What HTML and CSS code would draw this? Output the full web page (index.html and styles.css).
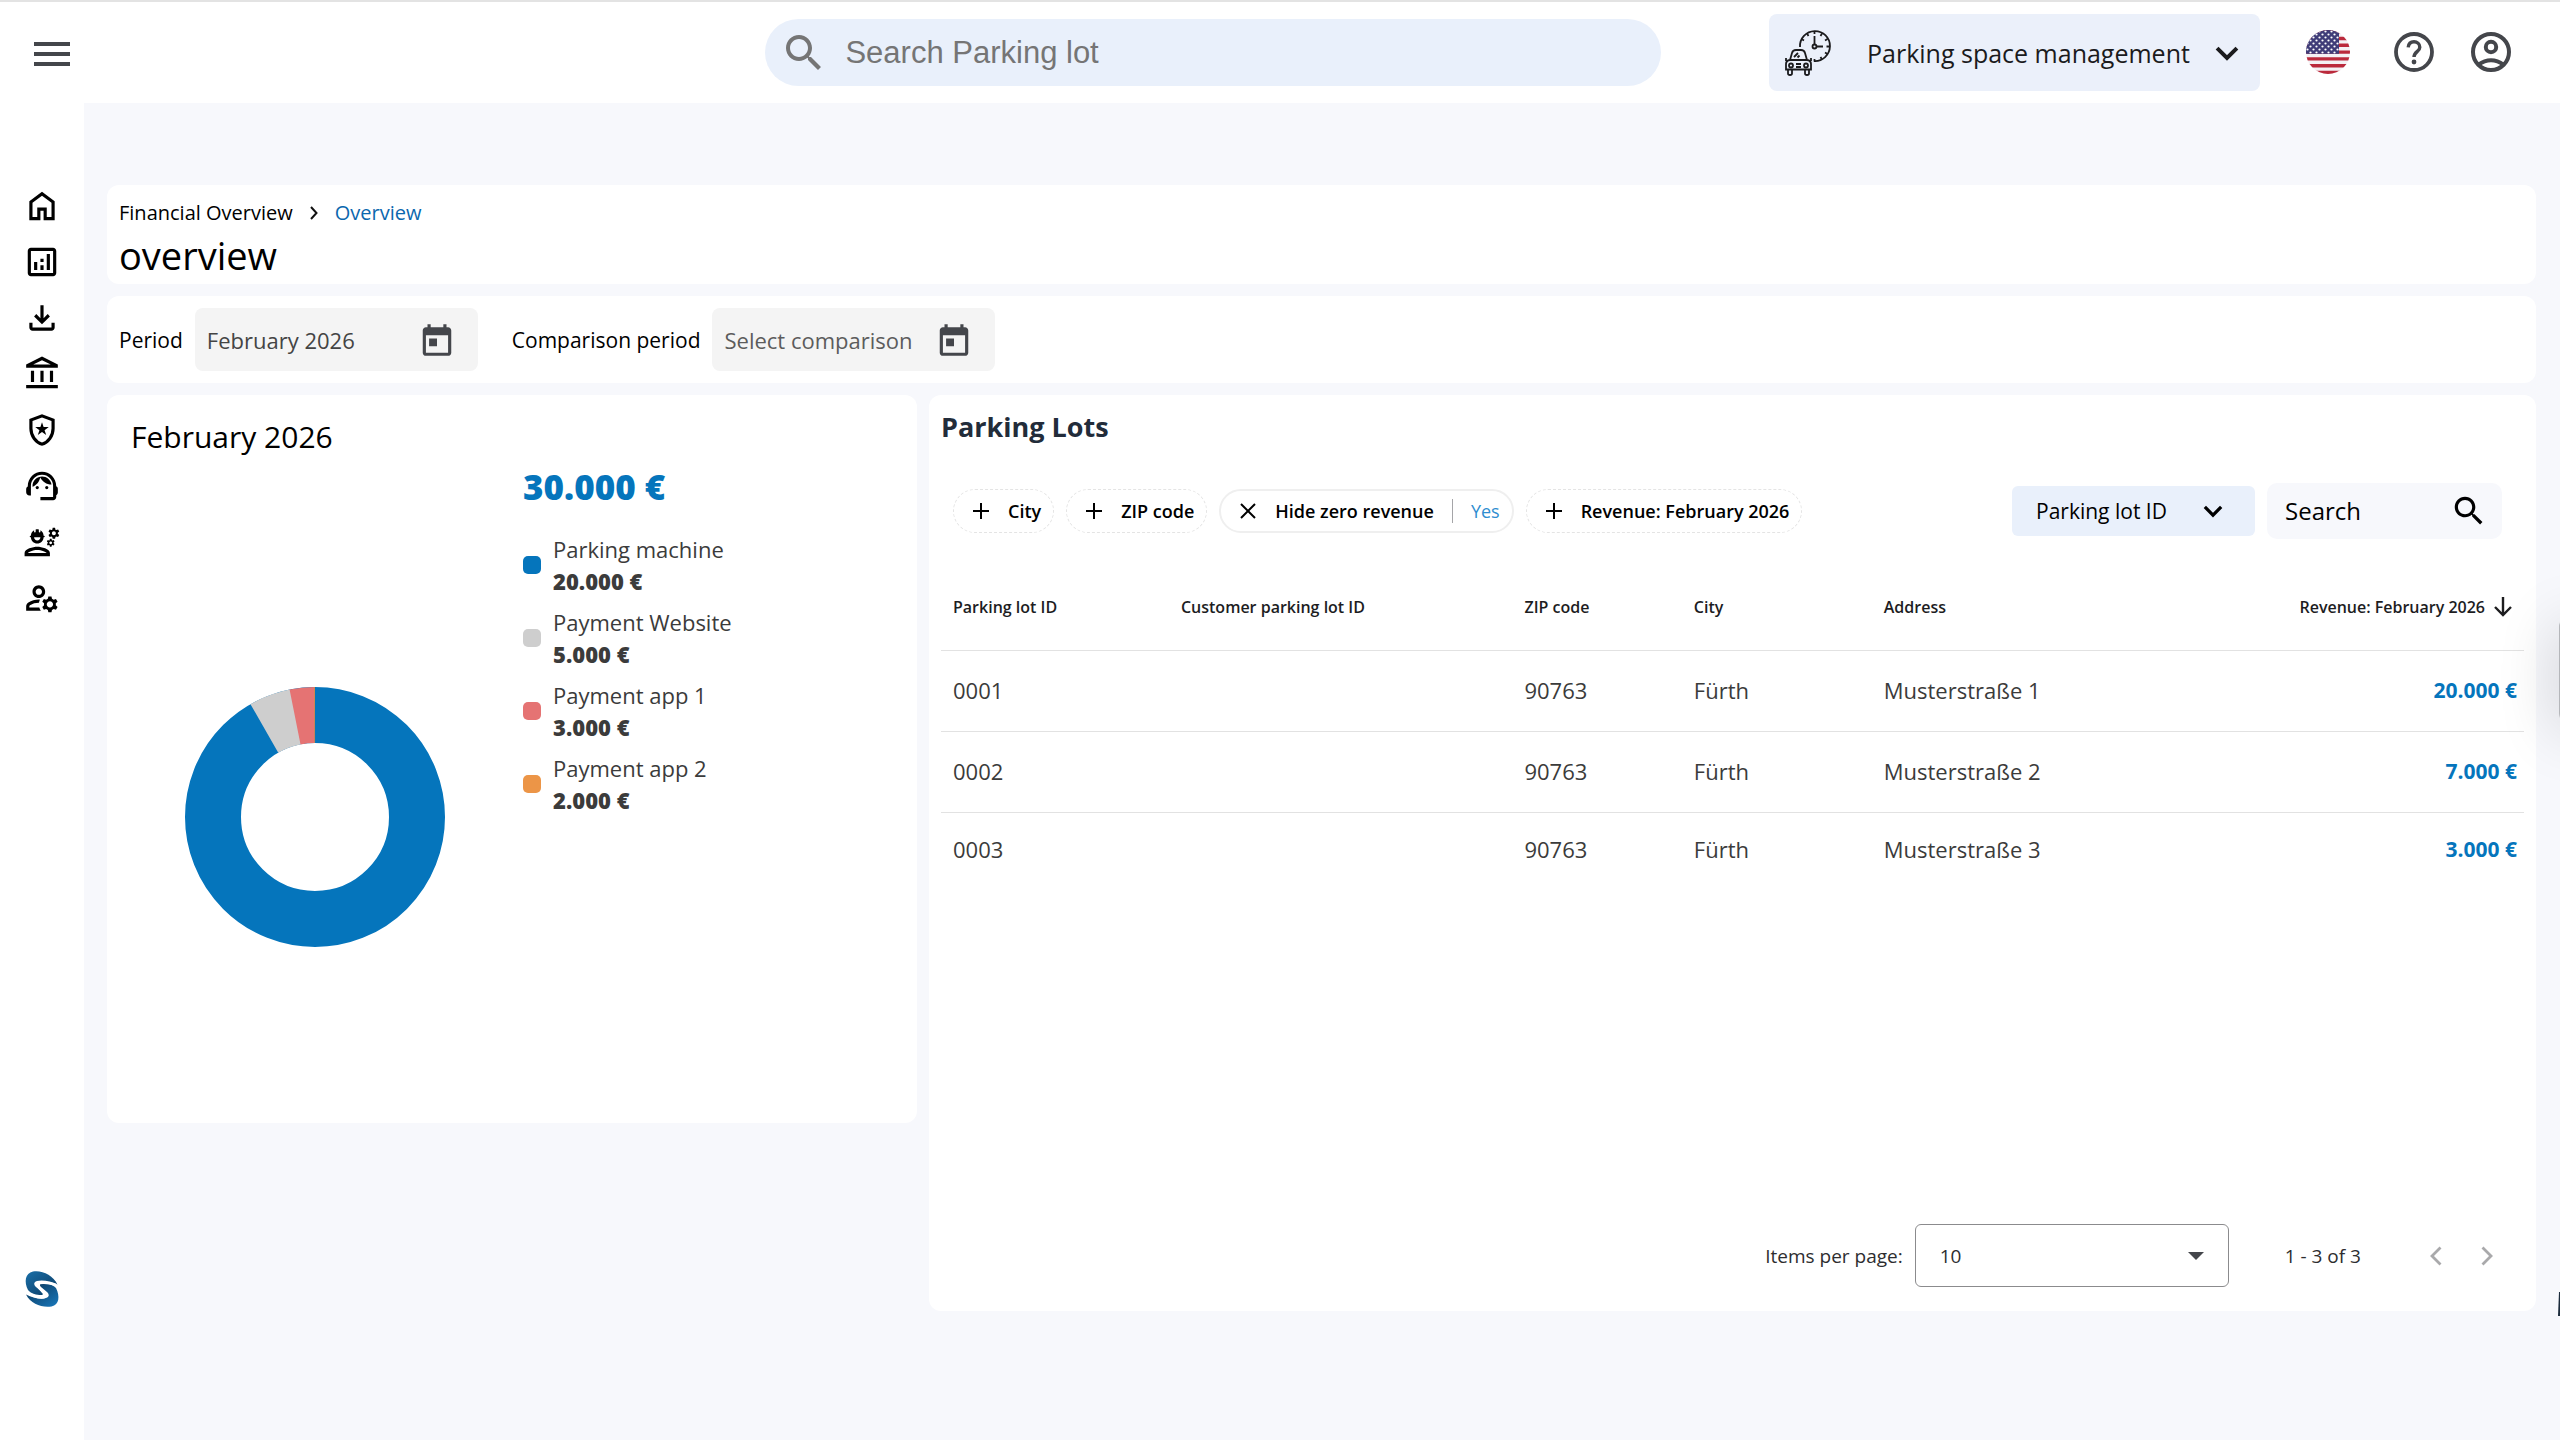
FILE: index.html
```html
<!DOCTYPE html>
<html lang="en">
<head>
<meta charset="utf-8">
<title>Financial Overview</title>
<link rel="stylesheet" href="styles.css">
</head>
<body>
<svg class="defs" aria-hidden="true">
  <symbol id="i-search" viewBox="0 0 24 24"><path d="M15.5 14h-.79l-.28-.27C15.41 12.59 16 11.11 16 9.5 16 5.91 13.09 3 9.5 3S3 5.91 3 9.5 5.91 16 9.5 16c1.61 0 3.09-.59 4.23-1.57l.27.28v.79l5 4.99L20.49 19l-4.99-5zm-6 0C7.01 14 5 11.99 5 9.5S7.01 5 9.5 5 14 7.01 14 9.5 11.99 14 9.5 14z"/></symbol>
  <symbol id="i-calendar" viewBox="0 0 24 24"><path d="M19 4h-1V2h-2v2H8V2H6v2H5c-1.1 0-2 .9-2 2v14c0 1.1.9 2 2 2h14c1.1 0 2-.9 2-2V6c0-1.1-.9-2-2-2zm0 16H5V9h14v11zM7 11h5v5H7z"/></symbol>
  <symbol id="i-chevron" viewBox="0 0 24 24"><path d="M5 8.5l7 7 7-7" fill="none" stroke="currentColor" stroke-width="2.800"/></symbol>
  <symbol id="i-plus" viewBox="0 0 18 18"><path d="M9 1v16M1 9h16" fill="none" stroke="currentColor" stroke-width="2"/></symbol>
  <symbol id="i-close" viewBox="0 0 18 18"><path d="M2 2l14 14M16 2L2 16" fill="none" stroke="currentColor" stroke-width="2"/></symbol>
</svg>

<header class="topbar">
  <div class="topbar-start">
    <button class="icon-button" type="button" aria-label="Menu">
      <svg width="36" height="24" viewBox="0 0 36 24"><path d="M0 2h36M0 12h36M0 22h36" stroke="#44464b" stroke-width="4"/></svg>
    </button>
  </div>
  <label class="global-search">
    <svg class="icon-48"><use href="#i-search"/></svg>
    <input type="search" placeholder="Search Parking lot" aria-label="Search Parking lot">
  </label>
  <div class="topbar-end">
    <div class="module">
      <svg class="module-icon" viewBox="0 0 64 64" stroke="#1b1b1d" stroke-width="1.800">
        <path d="M23 26A15 15 0 1 1 37 40"/>
        <circle cx="37.500" cy="25.500" r="2"/>
        <path d="M37.500 23V15M40 25.500H46M37.500 10v3M37.500 38v2.500M49.500 25.500H53M30 12.500l1.500 2.500M45 12.500L43.500 15M50.500 18L48 19.500M50.500 33L48 31.500M45 38.500L43.500 36M24.500 18l2.500 1.500"/>
        <path d="M13 39l2-7q.8-3 4-3h5q3.200 0 4 3l2 7M13 39q-4 .5-4 4v5.500h25V43q0-3.500-4-4zM11 49v3.500q0 1.500 2 1.500t2-1.500V49M28 49v3.500q0 1.500 2 1.500t2-1.500V49M9 40v-3M34 40v-3M17 36l4-4M20.500 36.500l2-2M19 43h5M19 46h5"/>
        <circle cx="14" cy="44.500" r="2"/><circle cx="29" cy="44.500" r="2"/>
      </svg>
      <select class="module-select" aria-label="Module"><option>Parking space management</option></select>
      <svg class="select-arrow icon-34"><use href="#i-chevron"/></svg>
    </div>
    <button class="icon-button flag" type="button" aria-label="Language: English">
      <svg width="44" height="44" viewBox="0 0 44 44">
        <defs>
          <clipPath id="disc"><circle cx="22" cy="22" r="22"/></clipPath>
          <pattern id="stars" width="6" height="6" patternUnits="userSpaceOnUse"><circle cx="1.500" cy="1.500" r="1.100" fill="#fff"/><circle cx="4.500" cy="4.500" r="1.100" fill="#fff"/></pattern>
        </defs>
        <g clip-path="url(#disc)">
          <rect width="44" height="44" fill="#f4f1f4"/>
          <path d="M0 1.700h44M0 8.500h44M0 15.300h44M0 22.100h44M0 28.900h44M0 35.700h44M0 42.500h44" stroke="#bb2a3c" stroke-width="3.400"/>
          <rect width="33" height="23.800" fill="#3f3c78"/><rect width="33" height="23.800" fill="url(#stars)"/>
        </g>
      </svg>
    </button>
    <button class="icon-button help" type="button" aria-label="Help">
      <svg class="icon-48" viewBox="0 0 24 24"><g fill="none" stroke="currentColor" stroke-width="1.900"><circle cx="12" cy="12" r="9"/><path d="M9.100 9.700c.2-1.800 1.400-2.800 2.900-2.800s2.900 1.100 2.900 2.700c0 2.200-2.900 2.300-2.900 4.900" stroke-width="1.700"/></g><circle cx="12" cy="17" r="1.200"/></svg>
    </button>
    <button class="icon-button" type="button" aria-label="Account">
      <svg class="icon-48" viewBox="0 0 24 24"><g fill="none" stroke="currentColor" stroke-width="2"><circle cx="12" cy="12" r="9"/><circle cx="12" cy="9.500" r="2.600"/><path d="M5.800 18.300q2.900-2.200 6.200-2.200t6.200 2.200"/></g></svg>
    </button>
  </div>
</header>

<div class="shell">
  <nav class="sidebar" aria-label="Main">
    <a href="#" aria-label="Home"><svg viewBox="0 0 24 24"><path d="M6 19h3v-6h6v6h3v-9l-6-4.500L6 10v9zm-2 2V9l8-6 8 6v12h-7v-6h-2v6H4z"/></svg></a>
    <a href="#" aria-label="Analytics"><svg viewBox="0 0 24 24"><path d="M19 3H5c-1.100 0-2 .9-2 2v14c0 1.100.9 2 2 2h14c1.100 0 2-.9 2-2V5c0-1.100-.9-2-2-2zm0 16H5V5h14v14zM7 12h2v5H7zM15 7h2v10h-2zM11 14h2v3h-2zM11 10h2v2h-2z"/></svg></a>
    <a href="#" aria-label="Downloads"><svg viewBox="0 0 24 24"><path d="M12 16l-5-5 1.400-1.450 2.600 2.600V4h2v8.150l2.600-2.600L17 11zM6 20c-1.100 0-2-.9-2-2v-3h2v3h12v-3h2v3c0 1.100-.9 2-2 2z"/></svg></a>
    <a href="#" aria-label="Finance"><svg viewBox="0 0 24 24"><path d="M5 17v-7h2v7zm6 0v-7h2v7zm-9 4v-2h20v2zm15-4v-7h2v7zM2 8V6l10-5 10 5v2zm4.450-2h11.100L12 3.250z"/></svg></a>
    <a href="#" aria-label="Enforcement"><svg viewBox="0 0 24 24"><path d="M12 22q-3.475-.875-5.738-3.988T4 11.100V5l8-3 8 3v6.100q0 3.800-2.262 6.913T12 22zm0-2.100q2.600-.825 4.300-3.300t1.700-5.500V6.375l-6-2.250-6 2.250V11.100q0 3.025 1.700 5.500t4.300 3.300z"/><path d="M12 7.050l1 3.120 3.280-.01-2.660 1.920 1.030 3.110L12 13.250l-2.650 1.940 1.030-3.110-2.660-1.920 3.280.01z"/></svg></a>
    <a href="#" aria-label="Support"><svg viewBox="0 0 24 24"><path d="M21 12.220C21 6.730 16.740 3 12 3c-4.690 0-9 3.650-9 9.280-.6.340-1 .98-1 1.720v2c0 1.100.9 2 2 2h1v-6.100c0-3.870 3.130-7 7-7s7 3.130 7 7V19h-8v2h8c1.100 0 2-.9 2-2v-1.220c.59-.31 1-.92 1-1.640v-2.300c0-.7-.41-1.310-1-1.620z"/><circle cx="9" cy="13" r="1"/><circle cx="15" cy="13" r="1"/><path d="M18 11.030C17.520 8.180 15.040 6 12.050 6c-3.030 0-6.290 2.510-6.030 6.450 2.470-1.010 4.330-3.210 4.860-5.890 1.310 2.630 4 4.440 7.120 4.470z"/></svg></a>
    <a href="#" aria-label="Technicians"><svg viewBox="0 0 24 24"><path d="M9 15c-2.670 0-8 1.340-8 4v2h16v-2c0-2.660-5.330-4-8-4zm-6 4c.22-.72 3.310-2 6-2 2.700 0 5.800 1.290 6 2H3zM4.740 9H5c0 2.210 1.790 4 4 4s4-1.790 4-4h.26c.27 0 .49-.22.49-.49v-.02c0-.27-.22-.49-.49-.49H13c0-1.480-.81-2.750-2-3.450v.95c0 .28-.22.5-.5.5s-.5-.22-.5-.5V4.140C9.680 4.060 9.350 4 9 4s-.68.060-1 .14V5.500c0 .28-.22.5-.5.5S7 5.780 7 5.500v-.95C5.810 5.250 5 6.520 5 8h-.26c-.27 0-.49.22-.49.49v.03c0 .26.22.48.49.48zM11 9c0 1.100-.9 2-2 2s-2-.9-2-2h4zM21.980 6.230l.93-.83-.75-1.300-1.190.39c-.14-.11-.3-.2-.47-.27L20.250 3h-1.500l-.25 1.220c-.17.070-.33.160-.48.270l-1.180-.39-.75 1.300.93.830c-.02.170-.02.350 0 .520l-.93.850.75 1.300 1.200-.38c.13.100.28.180.43.250l.28 1.230h1.500l.27-1.220c.16-.07.3-.15.44-.25l1.190.38.75-1.300-.93-.85c.03-.19.02-.36.01-.53zM19.500 7.750c-.69 0-1.250-.56-1.250-1.250s.56-1.250 1.250-1.250 1.250.56 1.250 1.250-.56 1.250-1.250 1.250zM19.400 10.790l-.85.28c-.1-.08-.21-.14-.33-.19l-.18-.88h-1.070l-.18.87c-.12.050-.24.120-.34.190l-.84-.28-.54.930.66.590c-.01.130-.01.250 0 .370l-.66.610.54.930.86-.27c.1.070.2.130.31.180l.18.880h1.070l.19-.87c.11-.05.22-.11.32-.18l.85.270.54-.93-.66-.61c.01-.13.01-.25 0-.37l.66-.59-.53-.93zm-1.900 2.600c-.49 0-.89-.4-.89-.89s.4-.89.89-.89.89.4.89.89-.4.89-.89.89z"/></svg></a>
    <a href="#" aria-label="User administration"><svg viewBox="0 0 24 24"><path d="M4 18v-.65c0-.34.16-.66.41-.81C6.100 15.530 8.030 15 10 15c.03 0 .05 0 .08.010.1-.7.3-1.370.59-1.980-.22-.02-.44-.03-.67-.03-2.420 0-4.680.67-6.610 1.820-.88.520-1.390 1.500-1.390 2.530V20h9.260c-.42-.6-.75-1.280-.97-2H4zM10 12c2.210 0 4-1.790 4-4s-1.790-4-4-4-4 1.790-4 4 1.790 4 4 4zm0-6c1.100 0 2 .9 2 2s-.9 2-2 2-2-.9-2-2 .9-2 2-2zM20.750 16c0-.22-.03-.42-.06-.63l1.140-1.010-1-1.730-1.450.49c-.32-.27-.68-.48-1.080-.63L18 11h-2l-.3 1.490c-.4.150-.76.360-1.080.630l-1.450-.49-1 1.730 1.140 1.010c-.03.210-.06.410-.06.630s.03.420.06.630l-1.140 1.010 1 1.730 1.450-.49c.32.270.68.480 1.080.63L16 21h2l.3-1.490c.4-.15.76-.36 1.080-.63l1.450.49 1-1.730-1.140-1.010c.03-.21.06-.41.06-.63zM17 18c-1.100 0-2-.9-2-2s.9-2 2-2 2 .9 2 2-.9 2-2 2z"/></svg></a>
    <a class="brand" href="#" aria-label="Start page">
      <svg viewBox="0 0 36 38">
        <defs><linearGradient id="brand-top" x1="0" y1="0" x2="1" y2="1"><stop offset="0" stop-color="#1a6fa8"/><stop offset="1" stop-color="#0a3a62"/></linearGradient>
        <linearGradient id="brand-bottom" x1="0" y1="0" x2="1" y2="1"><stop offset="0" stop-color="#0a3456"/><stop offset="1" stop-color="#1979bd"/></linearGradient></defs>
        <path d="M4 20C0 12 1 3 9 1.500 18 0 29 5 33.500 14.500 27 11 18 9.500 13 11c-4 1.500-3 4-1 6l6 5c2 2 1 3-1 3-4 0-10-1-13-5z" fill="url(#brand-top)"/>
        <path d="M32 18c4 8 3.500 17-4.500 18.500C18 38 7 34 2 24.500c7 3.500 15 5.500 20 3.500 4-1.500 3-4 1-6l-6-5c-2-2-1-3.500 1.500-3.500 5 0 10 1 13.500 4.500z" fill="url(#brand-bottom)"/>
        <path d="M4 23c6 4 15 5.500 17 3.500S13 17 13.500 14.500 24 12 32 15" fill="none" stroke="#fff" stroke-width="2.600"/>
      </svg>
    </a>
  </nav>

  <main class="content">
    <section class="card page-head">
      <nav class="breadcrumb" aria-label="Breadcrumb">
        <a href="#">Financial Overview</a>
        <svg width="8" height="14" viewBox="0 0 8 14"><path d="M1 1l5.500 6L1 13" fill="none" stroke="#111" stroke-width="2"/></svg>
        <a class="current" href="#">Overview</a>
      </nav>
      <h1>overview</h1>
    </section>

    <section class="card filters">
      <label for="period">Period</label>
      <div class="date-field">
        <input id="period" type="text" value="February 2026">
        <button class="icon-button" type="button" aria-label="Choose period"><svg class="icon-38"><use href="#i-calendar"/></svg></button>
      </div>
      <label class="second" for="comparison">Comparison period</label>
      <div class="date-field">
        <input id="comparison" type="text" placeholder="Select comparison">
        <button class="icon-button" type="button" aria-label="Choose comparison period"><svg class="icon-38"><use href="#i-calendar"/></svg></button>
      </div>
    </section>

    <div class="panels">
      <section class="card revenue">
        <h2>February 2026</h2>
        <div class="revenue-body">
          <svg class="donut" viewBox="-130 -130 260 260" role="img" aria-label="Revenue by payment channel">
            <g fill="none" stroke-width="56" transform="rotate(-90)">
              <circle r="102" pathLength="3600" stroke="#0575bc"/>
              <circle r="102" pathLength="3600" stroke="#cecece" stroke-dasharray="190 3410" stroke-dashoffset="-3302"/>
              <circle r="102" pathLength="3600" stroke="#e57373" stroke-dasharray="110 3490" stroke-dashoffset="-3487"/>
              <circle r="102" pathLength="3600" stroke="#d88a4a" stroke-dasharray="5 3595" stroke-dashoffset="-3595"/>
            </g>
          </svg>
          <div class="legend">
            <strong class="total">30.000 €</strong>
            <ul>
              <li><span class="swatch blue"></span><div>Parking machine<b>20.000 €</b></div></li>
              <li><span class="swatch grey"></span><div>Payment Website<b>5.000 €</b></div></li>
              <li><span class="swatch red"></span><div>Payment app 1<b>3.000 €</b></div></li>
              <li><span class="swatch orange"></span><div>Payment app 2<b>2.000 €</b></div></li>
            </ul>
          </div>
        </div>
      </section>

      <section class="card lots">
        <h2>Parking Lots</h2>
        <div class="toolbar">
          <button class="chip" type="button"><svg><use href="#i-plus"/></svg>City</button>
          <button class="chip" type="button"><svg><use href="#i-plus"/></svg>ZIP code</button>
          <button class="chip active" type="button"><svg><use href="#i-close"/></svg>Hide zero revenue<span>Yes</span></button>
          <button class="chip" type="button"><svg><use href="#i-plus"/></svg>Revenue: February 2026</button>
          <div class="sort">
            <select aria-label="Search column"><option>Parking lot ID</option></select>
            <svg class="select-arrow icon-28"><use href="#i-chevron"/></svg>
          </div>
          <label class="table-search">
            <input type="search" placeholder="Search" aria-label="Search">
            <svg class="icon-38"><use href="#i-search"/></svg>
          </label>
        </div>
        <table>
          <colgroup><col class="c-id"><col class="c-customer"><col class="c-zip"><col class="c-city"><col><col></colgroup>
          <thead>
            <tr><th>Parking lot ID</th><th>Customer parking lot ID</th><th>ZIP code</th><th>City</th><th>Address</th>
              <th class="amount"><span>Revenue: February 2026<svg width="20" height="20" viewBox="0 0 20 20"><path d="M10 0v18M2 10l8 8 8-8" fill="none" stroke="#1d1d1f" stroke-width="2.400"/></svg></span></th></tr>
          </thead>
          <tbody>
            <tr><td>0001</td><td></td><td>90763</td><td>Fürth</td><td>Musterstraße 1</td><td class="amount">20.000 €</td></tr>
            <tr><td>0002</td><td></td><td>90763</td><td>Fürth</td><td>Musterstraße 2</td><td class="amount">7.000 €</td></tr>
            <tr><td>0003</td><td></td><td>90763</td><td>Fürth</td><td>Musterstraße 3</td><td class="amount">3.000 €</td></tr>
          </tbody>
        </table>
        <div class="paginator">
          <label for="page-size">Items per page:</label>
          <div class="page-size">
            <select id="page-size"><option>10</option></select>
            <svg class="select-arrow" width="16" height="8" viewBox="0 0 16 8"><path d="M0 0h16L8 8z" fill="#44464b"/></svg>
          </div>
          <span class="range">1 - 3 of 3</span>
          <button class="icon-button" type="button" aria-label="Previous page" disabled><svg width="12" height="20" viewBox="0 0 12 20"><path d="M10.500 1.500L2 10l8.500 8.500" fill="none" stroke="#a9a9ab" stroke-width="2.800"/></svg></button>
          <button class="icon-button" type="button" aria-label="Next page" disabled><svg width="12" height="20" viewBox="0 0 12 20"><path d="M1.500 1.500L10 10l-8.500 8.500" fill="none" stroke="#a9a9ab" stroke-width="2.800"/></svg></button>
        </div>
      </section>
    </div>
  </main>
</div>
<div class="edge-tab"></div>
<div class="edge-widget"></div>
</body>
</html>
```
FILE: styles.css
```css
* { box-sizing: border-box; }

body {
  margin: 0;
  min-height: 100vh;
  display: flex;
  flex-direction: column;
  position: relative;
  overflow-x: hidden;
  background: #f7f8fc;
  color: #000;
  font: 22px/32px "Open Sans", "Noto Sans", sans-serif;
}

h1, h2, ul { margin: 0; padding: 0; font-weight: 400; list-style: none; }
a { color: inherit; text-decoration: none; }
svg { display: block; flex: none; fill: currentColor; }
input, select, button { font: inherit; color: inherit; border: 0; background: none; margin: 0; padding: 0; min-width: 0; }
input, select { appearance: none; outline: 0; }
input::-webkit-search-cancel-button { display: none; }

.defs { position: absolute; width: 0; height: 0; }
.icon-button { display: flex; align-items: center; justify-content: center; color: #44464b; }
.icon-28 { width: 28px; height: 28px; }
.icon-34 { width: 34px; height: 34px; }
.icon-38 { width: 38px; height: 38px; }
.icon-48 { width: 48px; height: 48px; }
.select-arrow { pointer-events: none; }

/* Top bar */
.topbar {
  display: grid;
  grid-template-columns: 29.9% 35% 1fr;
  align-items: center;
  height: 103px;
  border-top: 2px solid #e3e3e3;
  background: #fff;
}
.topbar-start { padding: 2px 34px 0; }
.global-search {
  display: flex;
  align-items: center;
  gap: 17px;
  height: 67px;
  padding: 0 32px 0 15px;
  border-radius: 34px;
  background: #e9f0fb;
  color: #757575;
}
.global-search input { flex: 1; font: 31px/40px "Liberation Sans", Arial, sans-serif; }
::placeholder { color: inherit; opacity: 1; }
.topbar-end { display: flex; align-items: center; justify-content: flex-end; padding-right: 45px; }
.topbar-end .icon-button { padding-bottom: 2px; }
.module {
  display: flex;
  align-items: center;
  height: 77px;
  padding-right: 16px;
  border-radius: 8px;
  background: #ebf0fa;
  color: #1b1b1d;
}
.module-icon { width: 64px; height: 64px; margin: 0 26px 0 8px; fill: none; }
.module-select { height: 77px; margin-right: 20px; font-size: 25px; }
.flag { margin-left: 46px; }
.help { margin: 0 29px 0 40px; }

/* Frame */
.shell { flex: 1; display: flex; }
.sidebar {
  flex: none;
  display: flex;
  flex-direction: column;
  align-items: center;
  gap: 18px;
  width: 84px;
  padding: 84px 0 132px;
  background: #fff;
}
.sidebar svg { width: 38px; height: 38px; }
.sidebar .brand { margin-top: auto; }
.sidebar .brand svg { width: 36px; }
.content {
  flex: 1;
  min-width: 0;
  display: flex;
  flex-direction: column;
  gap: 12px;
  padding: 82px 24px 129px 23px;
}
.card { border-radius: 12px; background: #fff; }

/* Heading and filters */
.page-head { padding: 12px 12px 7px; }
.breadcrumb { display: flex; align-items: center; gap: 17px; font-size: 20px; font-weight: 500; }
.breadcrumb .current { color: #0b67ae; font-weight: 400; }
h1 { margin-top: 4px; font-size: 38px; line-height: 44px; }
.filters { display: flex; align-items: center; gap: 12px; padding: 12px; font-size: 21px; font-weight: 500; }
.filters .second { margin-left: 22px; }
.date-field {
  display: flex;
  align-items: center;
  justify-content: space-between;
  width: 283px;
  height: 63px;
  padding: 0 22px 0 12px;
  border-radius: 8px;
  background: #f4f4f4;
  color: #444;
  font-size: 22px;
  font-weight: 400;
}
.date-field input { flex: 1; height: 63px; }
.date-field input::placeholder { color: #5c5c5c; }

/* Panels */
.panels { flex: 1; display: grid; grid-template-columns: 1fr 1.984fr; gap: 12px; }
.revenue { align-self: start; padding: 24px 24px 176px; }
.revenue h2 { font-size: 30px; line-height: 36px; font-weight: 500; }
.revenue-body { display: flex; align-items: flex-start; gap: 78px; padding-left: 54px; }
.donut { width: 260px; height: 260px; margin-top: 232px; }
.legend { padding-top: 12px; }
.total { display: block; color: #0575bc; font-size: 35px; line-height: 40px; font-weight: 800; }
.legend ul { display: grid; gap: 9px; padding-top: 26px; color: #3b3b3b; }
.legend li { display: flex; align-items: center; gap: 12px; }
.legend b { display: block; font-weight: 800; }
.swatch { width: 18px; height: 18px; border-radius: 5px; }
.blue { background: #0575bc; }
.grey { background: #cecece; }
.red { background: #e57373; }
.orange { background: #ec9547; }

/* Parking lots */
.lots { display: flex; flex-direction: column; padding: 16px 12px 24px; }
.lots h2 { color: #222c3a; font-size: 27px; line-height: 32px; font-weight: 700; }
.toolbar { display: flex; align-items: center; gap: 12px; height: 56px; margin: 40px 22px 32px 12px; }
.chip {
  display: flex;
  align-items: center;
  height: 44px;
  padding: 0 12px 0 18px;
  border: 1px dashed #e4e4e4;
  border-radius: 22px;
  font-size: 18px;
  font-weight: 600;
  white-space: nowrap;
}
.chip svg { width: 18px; height: 18px; margin-right: 18px; }
.chip.active { border-style: solid; border-width: 2px; border-color: #efefef; }
.chip span { margin-left: 18px; padding-left: 18px; border-left: 1px solid #a5a5a8; color: #2f8dd0; font-weight: 400; line-height: 24px; }
.sort {
  display: flex;
  align-items: center;
  gap: 32px;
  height: 50px;
  margin-left: auto;
  padding: 0 28px 0 24px;
  border-radius: 6px;
  background: #e9f0fb;
  font-size: 21px;
  font-weight: 500;
}
.sort select { height: 50px; }
.table-search { display: flex; align-items: center; width: 235px; height: 56px; padding: 0 14px 0 18px; border-radius: 10px; background: #f7f8fc; font-size: 24px; }
.table-search input { flex: 1; }

table { width: 100%; table-layout: fixed; border-collapse: collapse; }
.c-id { width: 14.4%; }
.c-customer { width: 21.7%; }
.c-zip { width: 10.7%; }
.c-city { width: 12%; }
th, td { padding: 23px 12px 25px; border-bottom: 1px solid #e2e2e2; text-align: left; }
th { padding: 20px 12px 27px; color: #1d1d1f; font-size: 16px; font-weight: 600; }
td { color: #3b3b3b; }
tbody tr:last-child td { padding-top: 20px; border-bottom: 0; }
.amount { text-align: right; padding-right: 7px; }
th.amount span { display: flex; align-items: center; justify-content: flex-end; gap: 8px; padding-right: 4px; }
td.amount { color: #0575bc; font-size: 21px; font-weight: 700; }

.paginator { display: flex; align-items: center; margin-top: auto; padding-right: 31px; justify-content: flex-end; color: #2d2d2f; font-size: 19px; }
.page-size { display: flex; align-items: center; width: 314px; height: 63px; margin-left: 12px; padding: 0 24px; border: 1px solid #8b8b8d; border-radius: 6px; }
.page-size select { flex: 1; height: 60px; }
.range { margin: 0 69px 0 56px; }
.paginator .icon-button + .icon-button { margin-left: 39px; }

/* Slide-out tab and chat widget parked at the right edge of the window */
.edge-tab { position: fixed; right: -39px; top: 615px; width: 40px; height: 110px; border-radius: 12px; background: #b4b6ba; box-shadow: 0 8px 60px rgba(0, 0, 0, .18); }
.edge-widget { position: fixed; right: 0; top: 1292px; width: 2px; height: 24px; background: #1c2c3c; clip-path: polygon(50% 0, 100% 0, 100% 100%, 0 100%); }
```
